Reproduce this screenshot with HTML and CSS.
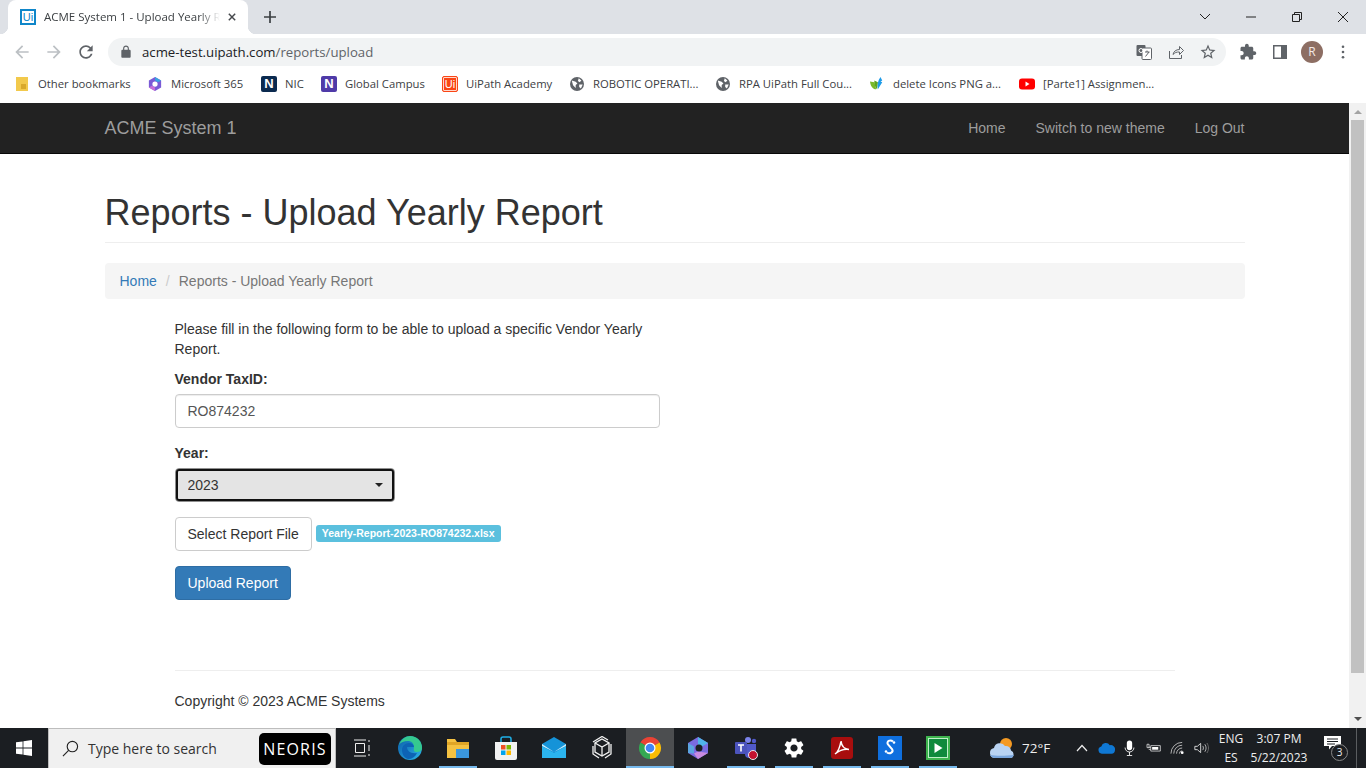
FILE: index.html
```html
<!DOCTYPE html>
<html lang="en">
<head>
    <meta charset="UTF-8">
    <title>ACME System 1 - Upload Yearly Report</title>
    <link rel="stylesheet" href="styles.css">
</head>
<body>
    <!-- browser chrome -->
    <div class="tabstrip">
        <div class="tab">
            <span class="fav-ui">Ui</span>
            <span class="tab-title">ACME System 1 - Upload Yearly Report</span>
            <svg class="tab-close" viewBox="0 0 10 10"><path d="M1 1l8 8M9 1l-8 8"/></svg>
        </div>
        <svg class="new-tab" viewBox="0 0 12 12"><path d="M6 0v12M0 6h12"/></svg>
        <div class="win-btns">
            <svg class="win-btn" viewBox="0 0 46 30"><path d="M18 12l5 5 5-5"/></svg>
            <svg class="win-btn" viewBox="0 0 46 30"><path d="M18 15h10"/></svg>
            <svg class="win-btn" viewBox="0 0 46 30"><path d="M18.5 12.5h7v7h-7zM20.5 12.5v-2h7v7h-2"/></svg>
            <svg class="win-btn" viewBox="0 0 46 30"><path d="M18 10l10 10M28 10l-10 10"/></svg>
        </div>
    </div>

    <div class="toolbar">
        <svg class="tool-icon faded" viewBox="0 0 24 24"><path d="M20 11H7.83l5.59-5.59L12 4l-8 8 8 8 1.41-1.41L7.83 13H20v-2z"/></svg>
        <svg class="tool-icon faded" viewBox="0 0 24 24"><path d="M12 4l-1.41 1.41L16.17 11H4v2h12.17l-5.58 5.59L12 20l8-8z"/></svg>
        <svg class="tool-icon" viewBox="0 0 24 24"><path d="M17.65 6.35C16.2 4.9 14.21 4 12 4c-4.42 0-7.99 3.58-7.99 8s3.57 8 7.99 8c3.73 0 6.84-2.55 7.73-6h-2.08c-.82 2.33-3.04 4-5.65 4-3.31 0-6-2.69-6-6s2.69-6 6-6c1.66 0 3.14.69 4.22 1.78L13 11h7V4l-2.35 2.35z"/></svg>
        <div class="omnibox">
            <svg class="lock" viewBox="0 0 24 24"><path d="M18 8h-1V6c0-2.76-2.24-5-5-5S7 3.24 7 6v2H6c-1.1 0-2 .9-2 2v10c0 1.1.9 2 2 2h12c1.1 0 2-.9 2-2V10c0-1.1-.9-2-2-2zM9 6c0-1.66 1.34-3 3-3s3 1.34 3 3v2H9V6z"/></svg>
            <span class="url">acme-test.uipath.com<span class="url-path">/reports/upload</span></span>
            <span class="omni-actions">
                <svg class="omni-icon" viewBox="0 0 16 16"><rect x="0.5" y="1" width="9" height="11" rx="1" fill="#5f6368"/><rect x="6" y="4" width="9.5" height="11.5" rx="1" fill="#fff" stroke="#5f6368"/><circle cx="5" cy="6.5" r="2" fill="none" stroke="#fff"/><path d="M9 8h4.5M11 6.5V8M9.5 12.5L13 8" stroke="#5f6368" fill="none"/></svg>
                <svg class="omni-icon" viewBox="0 0 16 16"><path d="M1.5 7v7.5h12V11M5 10.5c.5-3 3-5 6.5-5v-3l4 4-4 4V8C8.5 7.8 6.5 8.8 5 10.5z" fill="none" stroke="#5f6368"/></svg>
                <svg class="omni-star" viewBox="0 0 24 24"><path d="M22 9.24l-7.19-.62L12 2 9.19 8.63 2 9.24l5.46 4.73L5.82 21 12 17.27 18.18 21l-1.63-7.03L22 9.24zM12 15.4l-3.76 2.27 1-4.28-3.32-2.88 4.38-.38L12 6.1l1.71 4.04 4.38.38-3.32 2.88 1 4.28L12 15.4z"/></svg>
            </span>
        </div>
        <svg class="tool-icon ext" viewBox="0 0 24 24"><path d="M20.5 11H19V7c0-1.1-.9-2-2-2h-4V3.5C13 2.12 11.88 1 10.5 1S8 2.12 8 3.5V5H4c-1.1 0-1.99.9-1.99 2v3.8H3.5c1.49 0 2.7 1.21 2.7 2.7s-1.21 2.7-2.7 2.7H2V20c0 1.1.9 2 2 2h3.8v-1.5c0-1.49 1.21-2.7 2.7-2.7 1.49 0 2.7 1.21 2.7 2.7V22H17c1.1 0 2-.9 2-2v-4h1.5c1.38 0 2.5-1.12 2.5-2.5S21.88 11 20.5 11z"/></svg>
        <svg class="tool-icon panel" viewBox="0 0 14 14"><path fill-rule="evenodd" d="M0 0h14v14H0zM1.5 1.5v11H8v-11z"/></svg>
        <span class="avatar">R</span>
        <svg class="tool-icon dots" viewBox="0 0 4 16"><circle cx="2" cy="2" r="1.5"/><circle cx="2" cy="8" r="1.5"/><circle cx="2" cy="14" r="1.5"/></svg>
    </div>

    <div class="bookmarks">
        <span class="bm bm-1"><svg class="bm-icon" viewBox="0 0 12 14"><path d="M0 0h12v14H0z" fill="#f2c94c"/><path d="M5 7h5v5H5z" fill="#d9a92c"/></svg>Other bookmarks</span>
        <span class="bm bm-2"><svg class="bm-icon" viewBox="0 0 16 16"><path d="M8 0l7 4v8l-7 4-7-4V4z" fill="#7a5bd6"/><path d="M8 0l7 4-3.5 2L8 4z" fill="#38a3e0"/><path d="M1 12l3.5-2L8 12v4z" fill="#c86dd7"/><circle cx="8" cy="8" r="3" fill="#fff"/></svg>Microsoft 365</span>
        <span class="bm bm-3"><span class="fav-n dark">N</span>NIC</span>
        <span class="bm bm-4"><span class="fav-n violet">N</span>Global Campus</span>
        <span class="bm bm-5"><span class="fav-uip">Ui</span>UiPath Academy</span>
        <span class="bm bm-6"><svg class="bm-icon" viewBox="0 0 16 16"><circle cx="8" cy="8" r="8" fill="#5f6368"/><path d="M2 4l4.5 1.5 2 2-2 1.5v3.5L3.5 9.5zM10 1.5L13 4l-2 2-2-1.5zM10.500 8.500h4l-2 4.500-2-1.500z" fill="#fff"/></svg>ROBOTIC OPERATI...</span>
        <span class="bm bm-7"><svg class="bm-icon" viewBox="0 0 16 16"><circle cx="8" cy="8" r="8" fill="#5f6368"/><path d="M2 4l4.5 1.5 2 2-2 1.5v3.5L3.5 9.5zM10 1.5L13 4l-2 2-2-1.5zM10.500 8.500h4l-2 4.500-2-1.500z" fill="#fff"/></svg>RPA UiPath Full Cou...</span>
        <span class="bm bm-8"><svg class="bm-icon" viewBox="0 0 16 16"><path d="M0 5l5 1 2 8C3 14 .5 10 0 5z" fill="#7ab929"/><path d="M5 4l4 2-1 8C6 12 4.5 8 5 4z" fill="#5ba51f"/><path d="M12 0l2 4-2 1 2 1-5 8C8 9 9 4 12 0z" fill="#1e9be8"/></svg>delete Icons PNG a...</span>
        <span class="bm bm-9"><svg class="bm-icon yt" viewBox="0 0 16 12"><rect width="16" height="11" y="0.5" rx="3" fill="#f00"/><path d="M6.5 3.5v5l4-2.5z" fill="#fff"/></svg>[Parte1] Assignmen...</span>
    </div>

    <!-- the page itself -->
    <div class="viewport">
        <div class="page">
            <nav class="navbar">
                <div class="navbar-inner">
                    <a class="brand">ACME System 1</a>
                    <div class="nav-links">
                        <a>Home</a>
                        <a>Switch to new theme</a>
                        <a>Log Out</a>
                    </div>
                </div>
            </nav>

            <div class="container">
                <h1 class="page-header">Reports - Upload Yearly Report</h1>
                <div class="breadcrumb"><a>Home</a><span class="sep">/</span><span class="current">Reports - Upload Yearly Report</span></div>

                <form class="upload-form">
                    <p class="intro">Please fill in the following form to be able to upload a specific Vendor Yearly Report.</p>
                    <div class="form-group">
                        <label for="taxid">Vendor TaxID:</label>
                        <input class="form-control" id="taxid" type="text" value="RO874232">
                    </div>
                    <div class="form-group">
                        <label for="year">Year:</label>
                        <div class="select-wrap">
                            <select class="year-select" id="year"><option>2023</option></select>
                        </div>
                    </div>
                    <div class="form-group file-row">
                        <button type="button" class="btn">Select Report File</button>
                        <span class="file-label">Yearly-Report-2023-RO874232.xlsx</span>
                    </div>
                    <button type="button" class="btn btn-primary">Upload Report</button>
                </form>

                <footer class="footer">
                    <p>Copyright © 2023 ACME Systems</p>
                </footer>
            </div>
        </div>
        <div class="scrollbar">
            <span class="arrow-up"></span>
            <span class="thumb"></span>
            <span class="arrow-down"></span>
        </div>
    </div>

    <!-- windows taskbar -->
    <div class="taskbar">
        <div class="start">
            <svg class="start-logo" viewBox="0 0 16 16"><path d="M0 2.3l6.6-.9v6.2H0zM7.4 1.3L16 0v7.6H7.4zM0 8.4h6.6v6.2L0 13.7zM7.4 8.4H16V16l-8.6-1.3z"/></svg>
        </div>
        <div class="searchbox">
            <svg class="search-icon" viewBox="0 0 18 18"><circle cx="11" cy="7" r="5.5"/><path d="M7 11l-6 6"/></svg>
            <span class="search-text">Type here to search</span>
            <span class="neoris">NEORIS</span>
        </div>
        <div class="apps">
            <span class="app"><svg class="taskview" viewBox="0 0 18 18"><path d="M1 1h12M1 17h12M2.5 4.5h9v9h-9zM16 1v2M16 6v6M16 15v2"/></svg></span>
            <span class="app"><svg viewBox="0 0 24 24"><defs><linearGradient id="edge" x1="0" y1="0" x2="1" y2="1"><stop offset="0" stop-color="#0b5aa8"/><stop offset="1" stop-color="#2bb6e8"/></linearGradient></defs><circle cx="12" cy="12" r="12" fill="url(#edge)"/><path d="M1 9C3 3 8 0 12 0c7 0 12 5 12 12 0 3-3 4.5-6 4-3-.5-2-3-2-5C16 7 13 5 10 5 6 5 3 6 1 9z" fill="#35c98f"/><path d="M4 14c0-4 3-7 7-7 3 0 5 2 5 4H9c0 4 4 7 10 6-2 4-5 6-9 6-4-1-6-5-6-9z" fill="#0d63b4"/></svg></span>
            <span class="app running"><svg viewBox="0 0 24 24"><path d="M1 3h8l2 3h12v16H1z" fill="#f5c242"/><path d="M1 6h22v3H1z" fill="#e0a526"/><path d="M10 13h13v9H10z" fill="#3a96dd"/></svg></span>
            <span class="app"><svg viewBox="0 0 24 24"><path d="M7 6V3a2 2 0 012-2h6a2 2 0 012 2v3" fill="none" stroke="#1fb0e8" stroke-width="1.5"/><path d="M1 6h22v16a2 2 0 01-2 2H3a2 2 0 01-2-2z" fill="#f2f2f2"/><path d="M7 9h4.5v4.5H7z" fill="#f25022"/><path d="M12.5 9H17v4.5h-4.5z" fill="#7fba00"/><path d="M7 14.5h4.5V19H7z" fill="#00a4ef"/><path d="M12.5 14.5H17V19h-4.5z" fill="#ffb900"/></svg></span>
            <span class="app"><svg viewBox="0 0 24 24"><path d="M0 8l12-7 12 7v14H0z" fill="#1593d8"/><path d="M0 8l12 8 12-8v2l-12 6L0 10z" fill="#c7ecfb"/><path d="M0 10l12 7 12-7v12H0z" fill="#2bb4ee"/></svg></span>
            <span class="app"><svg viewBox="0 0 24 24" fill="none" stroke="#f2f2f2" stroke-width="1.3"><path d="M12 3l7 4v9l-7 4-7-4V7z"/><path d="M5 7l7 4 7-4M12 11v9"/><path d="M3 6l9-5.5 6 3.5M21 8v10l-6 4M9 22l-6-4V10"/></svg></span>
            <span class="app active"><svg viewBox="0 0 24 24"><path d="M12 12L2.47 6.5A11 11 0 0121.53 6.5z" fill="#ea4335"/><path d="M12 12l9.53-5.5A11 11 0 0112 23z" fill="#fbbc04"/><path d="M12 12v11A11 11 0 012.47 6.5z" fill="#34a853"/><circle cx="12" cy="12" r="5.5" fill="#fff"/><circle cx="12" cy="12" r="4.3" fill="#4285f4"/></svg></span>
            <span class="app"><svg viewBox="0 0 24 24"><path d="M12 1l10 6v10l-10 6-10-6V7z" fill="#7a6be0"/><path d="M12 1l10 6-6 3.5-4-2z" fill="#4fb3e8"/><path d="M2 7l6 3.5v7L2 17z" fill="#5aa5e0"/><path d="M8 17.5l4-2 10 1.5-10 6z" fill="#c98be0"/><circle cx="13" cy="12" r="3.5" fill="#1b1e22"/></svg></span>
            <span class="app running"><svg viewBox="0 0 24 24"><circle cx="14" cy="4" r="3" fill="#7b83eb"/><circle cx="20" cy="5" r="2.2" fill="#5059c9"/><path d="M11 8h11v10a4 4 0 01-4 4h-3a4 4 0 01-4-4z" fill="#5059c9"/><rect x="1" y="6" width="12" height="12" rx="1" fill="#4b53bc"/><path d="M4 9h6M7 9v6.5" stroke="#fff" stroke-width="1.6"/><circle cx="19" cy="19" r="4.5" fill="#c4122f" stroke="#e8e8e8"/></svg></span>
            <span class="app running"><svg class="gear" viewBox="0 0 24 24"><path d="M19.14 12.94c.04-.3.06-.61.06-.94 0-.32-.02-.64-.07-.94l2.03-1.58c.18-.14.23-.41.12-.61l-1.92-3.32c-.12-.22-.37-.29-.59-.22l-2.39.96c-.5-.38-1.03-.7-1.62-.94l-.36-2.54c-.04-.24-.24-.41-.48-.41h-3.84c-.24 0-.43.17-.47.41l-.36 2.54c-.59.24-1.13.57-1.62.94l-2.39-.96c-.22-.08-.47 0-.59.22L2.74 8.87c-.12.21-.08.47.12.61l2.03 1.58c-.05.3-.09.63-.09.94s.02.64.07.94l-2.03 1.58c-.18.14-.23.41-.12.61l1.92 3.32c.12.22.37.29.59.22l2.39-.96c.5.38 1.03.7 1.62.94l.36 2.54c.05.24.24.41.48.41h3.84c.24 0 .44-.17.47-.41l.36-2.54c.59-.24 1.13-.56 1.62-.94l2.39.96c.22.08.47 0 .59-.22l1.92-3.32c.12-.22.07-.47-.12-.61l-2.01-1.58zM12 15.6c-1.98 0-3.6-1.62-3.6-3.6s1.62-3.6 3.6-3.6 3.6 1.62 3.6 3.6-1.62 3.6-3.6 3.6z"/></svg></span>
            <span class="app running"><svg viewBox="0 0 24 24"><rect x="1" y="1" width="22" height="22" rx="3" fill="#a80e0e"/><path d="M5 18c3-2 5-7 6-13 .5 5 3 8 8 8.5-4-.5-9 .5-14 4.5z" fill="none" stroke="#fff" stroke-width="1.5"/></svg></span>
            <span class="app running"><svg viewBox="0 0 24 24"><rect width="24" height="24" fill="#0f6fde"/><path d="M15 5.5c-3-2.500-7 0-5 3l4 4.500c2 3-2 5.500-5 3.500" fill="none" stroke="#fff" stroke-width="2"/><circle cx="16" cy="6.5" r="1.3" fill="#fff"/><circle cx="8" cy="15.5" r="1.3" fill="#fff"/></svg></span>
            <span class="app running"><svg viewBox="0 0 24 24"><rect width="24" height="24" fill="#3fb54f"/><rect x="2.5" y="2.5" width="19" height="19" fill="#0f8a3c" stroke="#bff0c8"/><path d="M8.5 7v10l8-5z" fill="#fff"/></svg></span>
        </div>
        <div class="weather">
            <svg class="weather-icon" viewBox="0 0 26 24"><circle cx="17" cy="8" r="6" fill="#f59a23"/><path d="M6 22a5 5 0 01-1-9.9A6 6 0 0116 10a5 5 0 016 4.5A4 4 0 0122 22z" fill="#b9d3f2"/><path d="M1 19c5 1 16 1 24 0-1 2-2 3-3 3H6c-2 0-4-1-5-3z" fill="#7aa6dc"/></svg>
            <span class="temp">72°F</span>
        </div>
        <div class="tray">
            <svg class="tray-icon chevron" viewBox="0 0 12 8"><path d="M1 7l5-5.5L11 7"/></svg>
            <svg class="tray-icon onedrive" viewBox="0 0 18 12"><path d="M4 12a3.8 3.8 0 01-.5-7.500A5 5 0 0112.5 3 4.500 4.500 0 0118 8c0 2.5-1.500 4-3.500 4z" fill="#0f78d4"/></svg>
            <svg class="tray-icon" viewBox="0 0 12 18"><rect x="3" y="0.5" width="6" height="11" rx="3" fill="#fff"/><path d="M1 8.5a5 5 0 0010 0M6 13.5V17M3 17.5h6" fill="none" stroke="#fff"/></svg>
            <svg class="tray-icon" viewBox="0 0 22 14"><path d="M7 3.5h14v8H7zM7 6H4M7 9H4" fill="none" stroke="#fff"/><path d="M1.5 1.5h3v5h-3z" fill="none" stroke="#fff"/><path d="M9 5.5h9v4H9z" fill="#fff"/></svg>
            <svg class="tray-icon" viewBox="0 0 16 14" fill="none" stroke="#bbb"><path d="M1 13A12 12 0 0113 1M4 13a9 9 0 019-9M7 13a6 6 0 016-6M10 13a3 3 0 013-3"/><circle cx="13" cy="12" r="1.5" fill="#fff" stroke="none"/></svg>
            <svg class="tray-icon" viewBox="0 0 18 14" fill="none" stroke="#ccc"><path d="M1 5h3l4-3.5v11L4 9H1z" stroke="#eee"/><path d="M10.5 4.5c1 1.5 1 3.5 0 5M13 2.5c2 3 2 6 0 9"/><path d="M15.5 1c2.5 4 2.5 8 0 12" stroke="#777"/></svg>
        </div>
        <div class="lang"><span>ENG</span><span>ES</span></div>
        <div class="clock"><span>3:07 PM</span><span>5/22/2023</span></div>
        <div class="notify">
            <svg class="notify-icon" viewBox="0 0 17 14"><path d="M0 0h17v10H8l-3 3.5V10H0z" fill="#fff"/><path d="M3 3h11M3 5.5h11M3 8h8" stroke="#1b1e22"/></svg>
            <span class="notify-count">3</span>
        </div>
        <span class="show-desktop"></span>
    </div>
</body>
</html>
```

FILE: styles.css
```css
* {
    box-sizing: border-box;
}
body {
    margin: 0;
    height: 768px;
    overflow: hidden;
    display: flex;
    flex-direction: column;
    font-family: "Liberation Sans", Arial, sans-serif;
    font-size: 14px;
    line-height: 20px;
    color: #333;
    background: #fff;
}

/* tab strip */
.tabstrip {
    height: 34px;
    background: #dee1e6;
    display: flex;
    align-items: center;
    flex: none;
}
.tab {
    position: relative;
    align-self: flex-end;
    width: 240px;
    height: 34px;
    margin-left: 8px;
    padding: 0 11px 0 12px;
    display: flex;
    align-items: center;
    background: #fff;
    border-radius: 8px 8px 0 0;
    font-family: "Open Sans", sans-serif;
    font-size: 11.5px;
    color: #3c4043;
}
.tab::before,
.tab::after {
    content: "";
    position: absolute;
    bottom: 0;
    width: 8px;
    height: 8px;
}
.tab::before {
    left: -8px;
    background: radial-gradient(circle at 0 0, #dee1e6 8px, #fff 8.5px);
}
.tab::after {
    right: -8px;
    background: radial-gradient(circle at 100% 0, #dee1e6 8px, #fff 8.5px);
}
.fav-ui {
    flex: none;
    width: 16px;
    height: 16px;
    border: 2px solid #0f86c9;
    font: 11px/12px "Liberation Sans", sans-serif;
    color: #0f86c9;
    text-align: center;
}
.tab-title {
    flex: none;
    width: 176px;
    margin-left: 8px;
    white-space: nowrap;
    overflow: hidden;
    -webkit-mask-image: linear-gradient(to right, #000 88%, transparent);
    mask-image: linear-gradient(to right, #000 88%, transparent);
}
.tab-close {
    width: 8px;
    height: 8px;
    margin-left: 8px;
    fill: none;
    stroke: #45484c;
    stroke-width: 1.8;
}
.new-tab {
    width: 12px;
    height: 12px;
    margin-left: 16px;
    fill: none;
    stroke: #3c4043;
    stroke-width: 1.7;
}
.win-btns {
    margin-left: auto;
    display: flex;
}
.win-btn {
    width: 46px;
    height: 30px;
    fill: none;
    stroke: #222;
    stroke-width: 1;
}

/* toolbar */
.toolbar {
    height: 36px;
    flex: none;
    display: flex;
    align-items: center;
    padding-left: 12px;
    background: #fff;
}
.tool-icon {
    flex: none;
    width: 20px;
    height: 20px;
    margin-right: 12px;
    fill: #5f6368;
}
.tool-icon.faded {
    fill: #bcc0c4;
}
.omnibox {
    flex: none;
    width: 1118px;
    height: 28px;
    margin-right: 13px;
    padding-left: 11px;
    display: flex;
    align-items: center;
    background: #f1f3f4;
    border-radius: 14px;
}
.lock {
    width: 14px;
    height: 14px;
    fill: #5f6368;
}
.url {
    margin-left: 9px;
    font-family: "Open Sans", sans-serif;
    font-size: 13.2px;
    color: #202124;
}
.url-path {
    color: #5f6368;
}
.omni-actions {
    margin-left: auto;
    margin-right: 9px;
    display: flex;
    align-items: center;
    gap: 16px;
}
.omni-icon {
    width: 16px;
    height: 16px;
}
.omni-star {
    width: 18px;
    height: 18px;
    margin-left: -1px;
    fill: #5f6368;
}
.ext {
    width: 18px;
    height: 18px;
    margin-right: 16px;
}
.panel {
    width: 14px;
    height: 14px;
    margin-right: 14px;
}
.avatar {
    flex: none;
    width: 22px;
    height: 22px;
    border-radius: 50%;
    background: #8d6e63;
    color: #f5e9e4;
    font: 12px/22px "Open Sans", sans-serif;
    text-align: center;
}
.dots {
    width: 4px;
    height: 14px;
    margin: 0 0 0 18px;
}

/* bookmarks */
.bookmarks {
    height: 33px;
    flex: none;
    display: flex;
    align-items: center;
    padding-bottom: 5px;
    font-family: "Open Sans", sans-serif;
    font-size: 11.3px;
    color: #3c4043;
    white-space: nowrap;
}
.bm {
    display: flex;
    align-items: center;
    flex: none;
}
.bm-1 { width: 148px; padding-left: 16px; }
.bm-2 { width: 113px; }
.bm-3 { width: 60px; }
.bm-4 { width: 121px; }
.bm-5 { width: 128px; }
.bm-6 { width: 146px; }
.bm-7 { width: 154px; }
.bm-8 { width: 149px; }
.bm-9 { width: 140px; }
.bm-icon {
    flex: none;
    width: 14px;
    height: 14px;
    margin-right: 9px;
}
.bm-1 .bm-icon {
    width: 12px;
    height: 14px;
    margin-right: 10px;
}
.bm-icon.yt {
    width: 16px;
    height: 12px;
    margin-right: 8px;
}
.fav-n,
.fav-uip {
    flex: none;
    width: 16px;
    height: 16px;
    margin-right: 8px;
    border-radius: 2px;
    color: #fff;
    font: bold 13px/16px "Liberation Sans", sans-serif;
    text-align: center;
}
.fav-n.dark { background: #0b2a4f; }
.fav-n.violet { background: #4f3aa8; }
.fav-uip {
    background: #fa4616;
    border: 1px solid #fa4616;
    font: 11px/14px "Liberation Sans", sans-serif;
    box-shadow: inset 0 0 0 1px #ffd9cc;
}

/* page area */
.viewport {
    flex: 1;
    min-height: 0;
    display: flex;
    overflow: hidden;
}
.page {
    flex: 1;
    min-width: 0;
    overflow: hidden;
}
.navbar {
    height: 51px;
    background: #222;
    border-bottom: 1px solid #080808;
}
.navbar-inner {
    width: 1140px;
    height: 50px;
    margin-left: 104.5px;
    display: flex;
    align-items: center;
    justify-content: space-between;
    color: #9d9d9d;
}
.brand {
    font-size: 18px;
}
.nav-links {
    display: flex;
    gap: 30px;
}
.container {
    width: 1140px;
    margin-left: 104.5px;
}
.page-header {
    margin: 39px 0 20px;
    padding-bottom: 9px;
    border-bottom: 1px solid #eee;
    font-size: 36px;
    font-weight: 500;
    line-height: 40px;
}
.breadcrumb {
    height: 36px;
    padding: 8px 15px;
    margin-bottom: 20px;
    background: #f5f5f5;
    border-radius: 4px;
}
.breadcrumb a {
    color: #337ab7;
}
.sep {
    padding: 0 9px;
    color: #ccc;
}
.current {
    color: #777;
}
.upload-form {
    width: 485px;
    margin-left: 70px;
}
.intro {
    margin: 0 0 10px;
}
.form-group {
    margin-bottom: 15px;
}
label {
    display: block;
    margin-bottom: 5px;
    font-weight: bold;
}
.form-control {
    display: block;
    width: 100%;
    height: 34px;
    padding: 6px 12px;
    border: 1px solid #ccc;
    border-radius: 4px;
    font: inherit;
    color: #555;
    box-shadow: inset 0 1px 1px rgba(0, 0, 0, 0.075);
}
.select-wrap {
    position: relative;
    width: 220px;
}
.select-wrap::after {
    content: "";
    position: absolute;
    right: 12px;
    top: 15px;
    border-top: 4px solid #222;
    border-left: 4px solid transparent;
    border-right: 4px solid transparent;
}
.year-select {
    display: block;
    width: 100%;
    height: 34px;
    padding: 0 12px;
    appearance: none;
    background: #e4e4e4;
    border: 1px solid #8f8f8f;
    border-radius: 4px;
    outline: 2px solid #111;
    outline-offset: -3px;
    font: inherit;
    color: #333;
}
.file-row {
    display: flex;
    align-items: center;
    gap: 4px;
}
.btn {
    height: 34px;
    padding: 6px 12px;
    background: #fff;
    border: 1px solid #ccc;
    border-radius: 4px;
    font: inherit;
    color: #333;
}
.btn-primary {
    display: block;
    background: #337ab7;
    border-color: #2e6da4;
    color: #fff;
}
.file-label {
    height: 17px;
    margin-top: -1px;
    padding: 0 6px;
    background: #5bc0de;
    border-radius: 3px;
    color: #fff;
    font-size: 10.5px;
    font-weight: bold;
    line-height: 17px;
}
.footer {
    width: 1000px;
    margin: 70px 0 0 70px;
    padding-top: 20px;
    border-top: 1px solid #eee;
}
.footer p {
    margin: 0;
}

/* page scrollbar */
.scrollbar {
    flex: none;
    width: 17px;
    display: flex;
    flex-direction: column;
    align-items: center;
    background: #f1f1f1;
}
.arrow-up,
.arrow-down {
    flex: none;
    width: 0;
    border-left: 4px solid transparent;
    border-right: 4px solid transparent;
}
.arrow-up {
    margin-top: 7px;
    border-bottom: 4px solid #a3a3a3;
}
.arrow-down {
    margin: auto 0 7px;
    border-top: 4px solid #505050;
}
.thumb {
    flex: none;
    width: 13px;
    height: 553px;
    margin-top: 6px;
    background: #c1c1c1;
}

/* taskbar */
.taskbar {
    height: 40px;
    flex: none;
    display: flex;
    align-items: center;
    background: #1b1e22;
    color: #eee;
    font-family: "Open Sans", sans-serif;
    font-size: 12px;
    line-height: 16px;
}
.start {
    flex: none;
    width: 48px;
    display: flex;
    justify-content: center;
}
.start-logo {
    width: 16px;
    height: 16px;
    fill: #fff;
}
.searchbox {
    flex: none;
    width: 288px;
    height: 40px;
    padding: 0 4px 0 13px;
    display: flex;
    align-items: center;
    background: #f0f0f0;
    border: 1px solid #bdbdbd;
    border-width: 1px 1px 0;
    color: #333;
}
.search-icon {
    width: 17px;
    height: 17px;
    fill: none;
    stroke: #222;
    stroke-width: 1.2;
}
.search-text {
    margin-left: 9px;
    font-size: 14px;
}
.neoris {
    margin-left: auto;
    width: 72px;
    height: 32px;
    background: #000;
    border-radius: 5px;
    color: #fff;
    font: 16px/32px "Open Sans", sans-serif;
    letter-spacing: 1.2px;
    text-align: center;
}
.apps {
    flex: none;
    margin-left: 2px;
    display: flex;
}
.app {
    position: relative;
    width: 48px;
    height: 40px;
    display: flex;
    align-items: center;
    justify-content: center;
}
.app svg {
    width: 24px;
    height: 24px;
}
.app svg.taskview {
    width: 18px;
    height: 18px;
    fill: none;
    stroke: #eee;
}
.app svg.gear {
    fill: #fff;
}
.app.active {
    background: #4c4e50;
}
.app.running::after,
.app.active::after {
    content: "";
    position: absolute;
    left: 5px;
    right: 5px;
    bottom: 0;
    height: 2px;
    background: #76b9ed;
}
.app.active::after {
    left: 0;
    right: 0;
}
.weather {
    flex: none;
    width: 87px;
    margin-left: 27px;
    display: flex;
    align-items: center;
}
.weather-icon {
    width: 26px;
    height: 24px;
}
.temp {
    margin-left: 7px;
    font-size: 13.5px;
}
.tray {
    flex: none;
    width: 140px;
    display: flex;
    align-items: center;
    gap: 9px;
}
.tray-icon {
    flex: none;
    width: 15px;
    height: 16px;
}
.tray-icon.chevron {
    width: 12px;
    height: 8px;
    margin-right: 1px;
    fill: none;
    stroke: #eee;
    stroke-width: 1.2;
}
.tray-icon.onedrive {
    width: 17px;
    margin-right: -2px;
}
.lang,
.clock {
    flex: none;
    display: flex;
    flex-direction: column;
    align-items: center;
    gap: 3px;
}
.lang {
    width: 30px;
}
.clock {
    width: 66px;
}
.notify {
    position: relative;
    flex: none;
    width: 24px;
    height: 24px;
    margin-left: 12px;
}
.notify-icon {
    display: block;
    width: 17px;
    height: 14px;
}
.notify-count {
    position: absolute;
    left: 7px;
    top: 8px;
    width: 17px;
    height: 17px;
    border: 1px solid #888;
    border-radius: 50%;
    background: #1b1e22;
    font-size: 10px;
    line-height: 15px;
    text-align: center;
}
.show-desktop {
    flex: none;
    width: 1px;
    height: 40px;
    margin-left: 8px;
    background: #5a5d60;
}
```
